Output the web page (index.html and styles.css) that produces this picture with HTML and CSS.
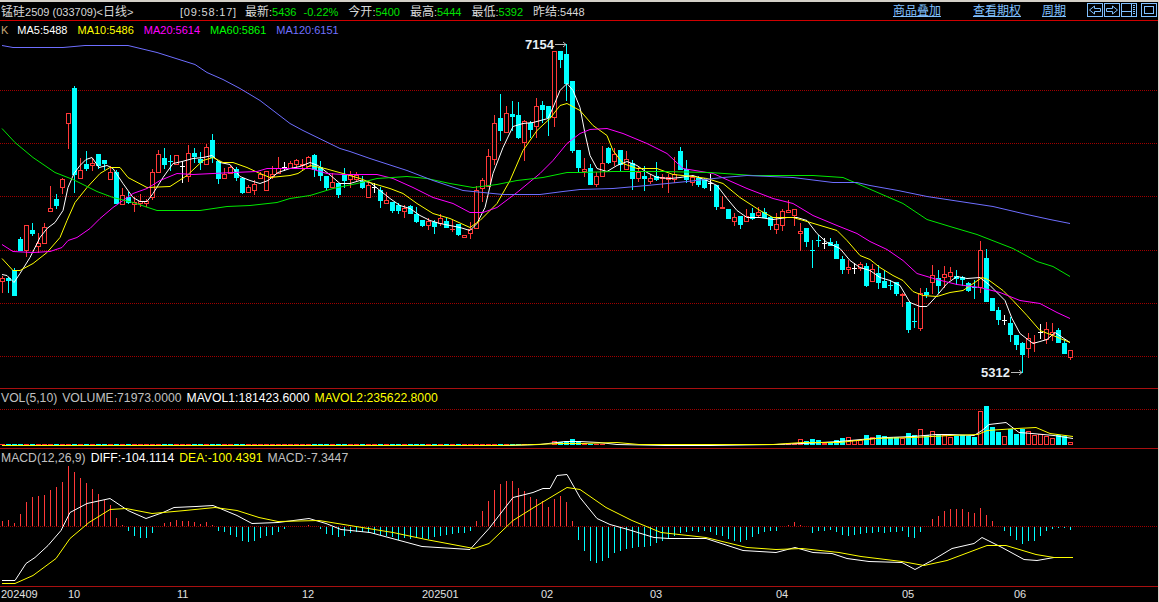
FILE: index.html
```html
<!DOCTYPE html>
<html lang="zh-CN">
<head>
    <meta charset="UTF-8">
    <title>锰硅2509 日线</title>
    <link rel="stylesheet" href="styles.css">
</head>
<body>
    <div class="toolbar">
        <div class="title"><span class="cjk">锰硅</span>2509 (033709)&lt;<span class="cjk">日线</span>&gt;</div>
        <div class="quote">
            <span class="clock">[09:58:17]</span>
            <span class="quote-item"><span class="cjk">最新</span>:<b>5436</b><b class="change">-0.22%</b></span>
            <span class="quote-item"><span class="cjk">今开</span>:<b>5400</b></span>
            <span class="quote-item"><span class="cjk">最高</span>:<b>5444</b></span>
            <span class="quote-item"><span class="cjk">最低</span>:<b>5392</b></span>
            <span class="quote-item"><span class="cjk">昨结</span>:5448</span>
        </div>
        <div class="tools">
            <a class="tool-link tool-link-wide" href="#">商品叠加</a>
            <a class="tool-link" href="#">查看期权</a>
            <a class="tool-link" href="#">周期</a>
            <div class="tool-icons">
                <svg class="tool-icon" viewBox="0 0 16 14"><rect x="0.5" y="0.5" width="15" height="13"/><polygon points="2.5,7 7.5,3 7.5,5.5 13.5,5.5 13.5,8.5 7.5,8.5 7.5,11"/></svg>
                <svg class="tool-icon" viewBox="0 0 16 14"><rect x="0.5" y="0.5" width="15" height="13"/><polygon points="13.5,7 8.5,3 8.5,5.5 2.5,5.5 2.5,8.5 8.5,8.5 8.5,11"/></svg>
                <svg class="tool-icon" viewBox="0 0 16 14"><rect x="0.5" y="0.5" width="15" height="13"/><path d="M1 8.5H10.5M10.5 1V13M12 2.5H14M12 4.5H14M12 6.5H14M12 8.5H14M12 10.5H14"/></svg>
                <svg class="tool-icon tool-icon-last" viewBox="0 0 16 14"><rect x="0.5" y="0.5" width="15" height="13"/><rect x="3.5" y="3.5" width="9" height="7"/></svg>
            </div>
        </div>
    </div>

    <div class="panel panel-main">
        <svg class="plot" id="plotMain" viewBox="0 21 1159 367"></svg>
        <div class="legend">
            <span class="k-label">K</span>
            <span class="white">MA5:5488</span>
            <span class="yellow">MA10:5486</span>
            <span class="magenta">MA20:5614</span>
            <span class="green">MA60:5861</span>
            <span class="blue">MA120:6151</span>
        </div>
    </div>

    <div class="panel panel-vol">
        <svg class="plot" id="plotVol" viewBox="0 389 1159 59"></svg>
        <div class="legend legend-tight">
            <span class="grey">VOL(5,10)</span>
            <span class="grey">VOLUME:71973.0000</span>
            <span class="white">MAVOL1:181423.6000</span>
            <span class="yellow">MAVOL2:235622.8000</span>
        </div>
    </div>

    <div class="panel panel-macd">
        <svg class="plot" id="plotMacd" viewBox="0 449 1159 137"></svg>
        <div class="legend legend-tight">
            <span class="grey">MACD(12,26,9)</span>
            <span class="white">DIFF:-104.1114</span>
            <span class="yellow">DEA:-100.4391</span>
            <span class="grey">MACD:-7.3447</span>
        </div>
    </div>

    <div class="axis" id="axis"></div>

    <script src="chart.js"></script>
</body>
</html>
```

FILE: styles.css
```css
* {
    margin: 0;
    padding: 0;
    box-sizing: border-box;
}

body {
    background: #000;
    color: #d8d8d8;
    font-family: "Liberation Sans", "Noto Sans CJK SC", sans-serif;
    font-size: 11px;
    width: 1159px;
    height: 602px;
    overflow: hidden;
    border-right: 1px solid #d4d0c8;
}

.cjk {
    font-family: "Noto Sans CJK SC", sans-serif;
    font-size: 12px;
}

.toolbar {
    display: flex;
    align-items: center;
    height: 21px;
    padding-bottom: 2px;
    border-top: 2px solid #d4d0c8;
    border-bottom: 1px solid #d00000;
    white-space: nowrap;
}

.title {
    width: 180px;
    padding-left: 1px;
}

.quote {
    display: flex;
    align-items: baseline;
    gap: 10px;
}

.clock {
    letter-spacing: 0.8px;
    margin-right: -2px;
}

.quote b {
    font-weight: normal;
    color: #00e000;
}

.quote-item .change {
    margin-left: 7px;
}

.tools {
    display: flex;
    align-items: center;
    margin-left: auto;
    padding-right: 1px;
}

.tool-link {
    font-family: "Noto Sans CJK SC", sans-serif;
    font-size: 12px;
    line-height: 14px;
    color: #80c0ff;
    margin-right: 21px;
}

.tool-link-wide {
    margin-right: 32px;
}

.tool-icons {
    display: flex;
    gap: 1px;
}

.tool-icon {
    display: block;
    width: 16px;
    height: 14px;
    fill: none;
    stroke: #80c0ff;
    stroke-width: 1;
}

.tool-icon-last {
    margin-left: 3px;
}

.panel {
    position: relative;
    overflow: hidden;
    border-bottom: 1px solid #a81010;
}

.panel-main {
    height: 368px;
}

.panel-vol {
    height: 60px;
}

.panel-macd {
    height: 138px;
}

.plot {
    position: absolute;
    top: 0;
    left: 0;
    width: 1159px;
}

#plotMain {
    height: 367px;
}

#plotVol {
    height: 59px;
}

#plotMacd {
    height: 137px;
}

.legend {
    position: relative;
    display: flex;
    gap: 10px;
    height: 18px;
    line-height: 18px;
    padding-left: 1px;
    white-space: nowrap;
}

.legend-tight {
    gap: 5px;
    font-size: 12.2px;
}

.k-label {
    color: #c8a878;
    margin-right: -1px;
}

.white {
    color: #fff;
}

.yellow {
    color: #ff0;
}

.magenta {
    color: #f0f;
}

.green {
    color: #0f0;
}

.blue {
    color: #7070ff;
}

.grey {
    color: #c0c0c0;
}

.axis {
    position: relative;
    height: 15px;
}

.axis-label {
    position: absolute;
    top: 0;
    line-height: 14px;
    color: #e0e0e0;
}

.extreme {
    font-family: "Liberation Sans", sans-serif;
    font-size: 13px;
    font-weight: bold;
    fill: #e8eef4;
}
```

FILE: chart.js
```js
const RED = '#ff3838';
const CYAN = '#00ffff';
const GRID = '#a00000';

// r = red hollow, c = cyan solid, w = white cross: [type, bodyTop, bodyBottom, high, low]
const candles = [
    ['r',278,281,276,292],['c',278,280,277,292],['c',270,295,268,295],['c',239,250,237,250],['r',225,250,225,256],
    ['c',230,233,223,235],['r',243,246,233,252],['r',227,243,223,243],['r',208,211,186,211],['c',199,205,194,208],
    ['r',179,187,178,193],['r',113,123,113,148],['c',88,174,86,192],['r',170,178,158,178],['c',164,168,151,170],
    ['r',163,165,158,170],['c',154,165,154,168],['c',160,163,160,169],['r',172,179,166,179],['c',172,203,170,203],
    ['r',195,204,188,204],['c',197,202,192,203],['r',202,204,197,211],['r',201,203,194,206],['r',201,203,199,206],
    ['r',172,197,169,199],['r',154,172,150,172],['c',158,164,148,168],['c',161,161,155,170],['r',155,164,155,164],
    ['w',166,166,161,182],['r',153,176,145,181],['c',153,156,148,162],['c',159,162,152,169],['r',147,164,144,164],
    ['c',140,157,134,162],['c',161,178,161,183],['r',174,178,168,178],['r',167,173,165,173],['c',169,177,167,180],
    ['c',178,192,178,193],['r',187,192,185,192],['r',184,190,180,194],['r',174,178,172,178],['r',171,190,171,190],
    ['r',174,176,166,178],['r',168,173,157,173],['w',167,167,162,170],['r',163,168,161,168],['r',160,164,159,168],
    ['r',164,165,159,170],['r',157,166,156,166],['c',155,169,154,176],['c',167,175,161,180],['c',176,187,176,189],
    ['r',182,187,173,187],['c',183,194,183,197],['c',174,180,168,187],['r',175,179,171,187],['r',175,179,172,180],
    ['c',181,187,176,188],['r',185,197,183,197],['w',187,187,183,192],['c',190,200,187,207],['r',200,203,192,203],
    ['c',202,210,202,212],['c',205,210,203,213],['r',208,211,205,217],['c',206,213,205,213],['c',214,221,207,222],
    ['c',220,225,220,226],['r',221,225,218,229],['c',222,226,220,233],['r',218,223,214,225],['c',221,227,218,227],
    ['r',229,229,220,231],['c',224,234,224,235],['r',235,237,235,237],['r',229,233,222,238],['r',190,228,186,228],
    ['r',180,188,178,201],['r',156,186,149,186],['r',123,159,115,164],['c',118,130,94,140],['r',113,132,106,132],
    ['c',114,116,101,130],['c',115,137,102,138],['r',121,142,120,160],['c',123,129,121,137],['r',106,126,98,137],
    ['c',105,109,101,122],['c',106,117,106,135],['r',51,117,51,126],['c',51,59,51,67],['c',54,83,44,100],
    ['c',81,150,81,152],['c',150,167,150,172],['r',169,171,158,176],['c',168,184,164,184],['r',176,184,172,186],
    ['r',163,176,146,176],['c',148,162,147,163],['r',154,161,148,165],['c',150,164,150,170],['r',159,169,151,169],
    ['c',163,178,160,189],['r',172,178,166,181],['c',176,178,166,190],['r',178,181,174,183],['c',176,179,162,180],
    ['r',177,178,174,187],['r',177,179,174,192],['r',174,179,157,182],['c',151,169,147,169],['c',169,179,160,182],
    ['r',177,182,175,185],['c',178,184,176,186],['c',179,187,178,188],['w',183,183,174,190],['c',185,206,185,209],
    ['r',207,208,196,208],['c',209,218,209,218],['r',217,221,213,225],['c',216,224,216,228],['r',216,221,209,221],
    ['c',213,218,208,219],['r',212,215,207,217],['c',212,217,208,217],['c',217,225,216,229],['r',224,229,213,233],
    ['r',211,225,209,230],['r',210,212,200,212],['r',209,215,209,225],['r',231,233,223,250],['c',228,241,228,246],
    ['c',250,250,240,267],['c',240,240,235,246],['w',243,243,238,248],['c',242,245,238,245],['c',244,258,241,258],
    ['c',259,269,256,273],['r',267,269,260,273],['w',268,268,263,273],['r',264,268,262,270],['c',266,285,263,286],
    ['r',269,281,264,281],['c',273,282,265,288],['c',281,287,270,287],['c',285,285,280,289],['c',282,293,282,295],
    ['r',294,295,293,306],['c',302,329,302,332],['c',321,321,308,327],['r',293,328,288,330],['c',292,294,288,297],
    ['r',275,282,265,293],['c',278,285,270,292],['r',274,277,266,287],['r',272,276,267,279],['c',276,278,270,284],
    ['c',277,279,276,285],['c',283,290,282,291],['c',287,287,280,298],['r',250,287,241,292],['c',258,301,249,301],
    ['c',298,310,298,310],['c',310,319,307,324],['w',320,320,315,324],['c',323,334,317,341],['c',335,344,335,349],
    ['c',343,354,342,372],['r',338,348,333,357],['r',342,342,335,351],['w',332,332,324,338],['r',329,339,322,343],
    ['r',332,334,323,340],['c',330,342,328,342],['c',343,353,339,353],['r',350,357,350,359]
];

const maLines = [
    { color: '#ffffff', points: [2,274,7,275,14,282,20,273,30,257,40,237,47,228,55,222,63,210,68,187,74,173,80,165,86,159,92,157,99,167,107,165,113,168,123,183,133,197,140,201,147,201,153,193,163,177,173,163,182,161,193,158,203,157,212,155,220,162,230,164,240,176,250,180,260,183,268,180,278,172,290,168,300,166,310,162,318,165,327,172,333,177,340,183,350,183,360,180,370,182,380,190,390,198,400,205,410,208,420,215,430,220,440,223,450,225,460,227,470,230,477,223,485,207,493,173,503,147,513,126,523,123,533,122,548,118,553,107,560,90,567,83,573,90,580,107,585,133,590,155,597,168,607,171,617,165,627,161,637,165,647,172,657,177,670,178,680,177,693,175,707,180,717,185,727,198,737,210,747,217,760,217,773,219,787,217,797,217,807,220,817,233,827,242,840,248,850,260,860,267,870,270,880,277,890,280,900,285,910,302,920,306,927,306,937,295,947,283,957,276,967,278,980,277,990,285,1005,300,1012,318,1020,333,1033,343,1047,339,1055,332,1070,342] },
    { color: '#ffff00', points: [2,258,13,270,20,270,33,263,47,252,60,237,67,220,75,202,87,187,100,173,110,167,120,167,128,177,147,187,170,186,187,175,203,160,213,157,223,162,233,162,247,167,260,173,270,177,290,175,298,173,310,165,325,168,343,173,360,178,373,183,390,188,403,193,417,203,433,213,450,218,470,227,480,220,497,203,510,180,523,150,537,130,550,118,560,105,567,103,580,110,593,125,607,135,613,150,623,163,637,168,657,168,673,174,693,176,707,178,723,183,740,197,760,210,773,217,793,217,807,221,817,224,837,230,847,240,860,255,870,259,880,267,893,275,903,280,913,291,923,295,937,296,950,292,963,290,982,277,988,279,1003,290,1013,300,1027,315,1040,330,1053,335,1070,342] },
    { color: '#ff00ff', points: [2,244,13,251,33,252,50,251,62,247,68,240,77,237,90,228,100,218,113,207,123,200,133,193,147,188,160,180,177,173,193,174,213,173,233,172,257,171,267,168,290,168,310,168,327,173,343,174,377,174,393,178,413,187,433,197,453,203,470,212,483,212,497,207,517,192,540,173,553,160,567,143,580,133,590,129,607,128,623,133,647,143,667,153,683,168,713,173,747,188,773,198,793,203,813,215,837,225,857,233,870,241,887,249,903,260,917,273,937,279,957,284,980,287,1000,292,1020,300,1040,303,1057,312,1070,318] },
    { color: '#00e800', points: [2,128,15,142,33,157,55,172,73,179,97,191,113,197,133,202,157,210,200,210,227,206,250,205,277,202,290,198,310,195,333,188,357,183,377,178,407,176,427,178,450,183,473,187,497,184,517,180,543,177,567,172,580,172,613,171,663,171,710,172,753,175,813,175,843,177,857,183,873,190,903,203,927,219,950,226,977,234,1013,248,1037,261,1053,266,1070,276] },
    { color: '#6e6eff', points: [2,45,13,47,63,47,85,45,128,45,157,52,195,64,207,72,223,79,240,88,260,100,277,113,290,123,303,130,340,148,350,151,370,158,407,170,433,180,463,190,503,194,540,194,563,191,580,189,613,188,647,185,687,181,723,177,747,175,793,177,833,182,857,182,870,185,898,190,927,196,960,201,993,206,1027,214,1050,219,1070,223] }
];

// volume bar height per candle from index 89 on, everything before it is a 1px stub
const volumeTail = { 92:4,93:3,94:3,95:6,96:4,97:2,98:1,99:1,100:1,112:1,129:1,130:1,131:2,132:2,133:6,134:4,135:6,136:5,137:2,138:2,139:5,140:7,141:8,142:5,143:5,144:10,145:8,146:10,147:9,148:8,149:8,150:7,151:12,152:10,153:16,154:10,155:14,156:10,157:10,158:8,159:9,160:10,161:9,162:8,163:34,164:39,165:18,166:13,167:9,168:16,169:11,170:16,171:14,172:10,173:11,174:9,175:7,176:10,177:9,178:3 };

const volLines = [
    { color: '#ffffff', points: [2,445,510,445,540,444,565,441,580,441,599,442,617,444,665,445,710,445,776,444,802,443,821,442,839,441,861,439,887,437,913,436,936,434,950,434,974,435,982,430,989,424,1006,422,1019,432,1032,433,1054,435,1073,438] },
    { color: '#ffff00', points: [2,445,500,445,535,444,560,443,580,443,617,442,639,444,773,444,802,442,839,442,876,438,913,437,950,435,978,434,987,430,1017,428,1036,427,1050,433,1073,436] }
];

const macdBars = [5,6,3,12,24,29,30,31,36,39,44,60,54,48,43,37,32,26,21,8,1,-4,-9,-11,-11,-6,0,3,4,6,5,5,4,2,4,1,-4,-5,-8,-10,-14,-15,-14,-11,-9,-8,-5,-2,0,0,0,1,0,-2,-7,-8,-10,-9,-6,-5,-5,-6,-7,-8,-9,-10,-13,-11,-12,-10,-11,-12,-10,-9,-8,-7,-6,-6,-4,5,15,25,36,42,45,45,38,35,29,27,25,19,27,30,24,5,-13,-24,-34,-36,-34,-31,-26,-24,-22,-21,-20,-20,-19,-16,-14,-12,-9,-6,-5,-4,-5,-4,-5,-8,-9,-12,-14,-15,-13,-10,-7,-5,-4,-4,0,1,4,1,0,-6,-4,-4,-3,-5,-8,-9,-8,-7,-6,-6,-5,-6,-5,-5,-4,-10,-11,-5,0,7,10,15,17,17,17,14,13,18,11,5,0,-4,-9,-13,-17,-14,-14,-9,-4,-2,-1,-1,-3];

const macdLines = [
    { color: '#ffffff', points: [2,580,15,580,26,563,35,557,48,545,61,530,70,512,87,503,110,498,128,510,146,518,163,512,174,507,196,506,213,505,237,515,252,523,278,522,309,518,326,523,341,529,370,532,396,539,422,546,470,549,489,528,513,497,533,492,543,488,550,488,557,475,567,474,580,497,597,518,610,524,628,529,654,537,669,538,706,538,743,550,776,552,795,547,813,552,832,553,847,558,869,561,902,562,915,569,932,560,952,548,974,543,982,537,1002,547,1024,559,1037,560,1054,557,1073,557] },
    { color: '#ffff00', points: [2,583,15,583,33,575,56,558,70,538,89,522,110,509,126,508,152,513,185,510,215,507,237,510,259,517,278,521,319,520,356,526,393,532,426,539,474,548,489,543,513,520,537,505,567,487,580,489,606,507,632,520,661,532,706,537,747,547,776,549,802,548,839,552,861,556,902,561,924,565,947,560,987,545,1006,545,1036,554,1054,557,1073,557] }
];

const monthLabels = [
    ['202409', 1], ['10', 68], ['11', 177], ['12', 302], ['202501', 422],
    ['02', 541], ['03', 650], ['04', 776], ['05', 902], ['06', 1014]
];

// Build one svg node
function node(parent, name, attrs, text) {
    const el = document.createElementNS('http://www.w3.org/2000/svg', name);
    Object.keys(attrs).forEach(key => el.setAttribute(key, attrs[key]));
    if (text) el.textContent = text;
    parent.appendChild(el);
    return el;
}

function candleX(i) {
    return 2 + 6 * i;
}

function vLine(svg, x, y1, y2, color) {
    node(svg, 'rect', { x: x, y: y1, width: 1, height: Math.max(y2 - y1, 1), fill: color, 'shape-rendering': 'crispEdges' });
}

function gridLine(svg, y) {
    node(svg, 'line', { x1: 0, x2: 1159, y1: y, y2: y, stroke: GRID, 'stroke-dasharray': '1 1', 'shape-rendering': 'crispEdges' });
}

function polyline(svg, line) {
    const pts = [];
    for (let i = 0; i < line.points.length; i += 2) {
        pts.push(line.points[i] + ',' + (line.points[i + 1] + 0.5));
    }
    node(svg, 'polyline', { points: pts.join(' '), fill: 'none', stroke: line.color, 'stroke-width': 1 });
}

// Main price panel
function drawMain() {
    const svg = document.getElementById('plotMain');
    [90.5, 143.5, 196.5, 250.5, 303.5, 356.5].forEach(y => gridLine(svg, y));

    candles.forEach((c, i) => {
        const [type, top, bottom, high, low] = c;
        const x = candleX(i);
        const color = type === 'r' ? RED : type === 'c' ? CYAN : '#ffffff';
        vLine(svg, x, high, low + 1, color);
        if (top === bottom) {
            node(svg, 'rect', { x: x - 2, y: top, width: 5, height: 1, fill: color, 'shape-rendering': 'crispEdges' });
        } else if (type === 'r') {
            node(svg, 'rect', { x: x - 1.5, y: top + 0.5, width: 4, height: bottom - top, fill: '#000', stroke: color, 'shape-rendering': 'crispEdges' });
        } else {
            node(svg, 'rect', { x: x - 2, y: top, width: 5, height: bottom - top + 1, fill: color, 'shape-rendering': 'crispEdges' });
        }
    });

    maLines.forEach(line => polyline(svg, line));

    node(svg, 'text', { x: 525, y: 49, class: 'extreme' }, '7154');
    node(svg, 'path', { d: 'M555 44.5H566M563 42L566 44.5L563 47', fill: 'none', stroke: '#b8b8b8' });
    node(svg, 'text', { x: 981, y: 377, class: 'extreme' }, '5312');
    node(svg, 'path', { d: 'M1011 372.5H1022M1019 370L1022 372.5L1019 375', fill: 'none', stroke: '#b8b8b8' });
}

// Volume panel
function drawVolume() {
    const svg = document.getElementById('plotVol');
    gridLine(svg, 409.5);

    candles.forEach((c, i) => {
        const h = volumeTail[i] || (i < 89 ? 1 : 0);
        if (!h) return;
        const x = candleX(i);
        if (c[0] === 'c') {
            node(svg, 'rect', { x: x - 2, y: 445 - h, width: 5, height: h, fill: CYAN, 'shape-rendering': 'crispEdges' });
        } else if (h > 2) {
            node(svg, 'rect', { x: x - 1.5, y: 445.5 - h, width: 4, height: h - 1, fill: '#000', stroke: RED, 'shape-rendering': 'crispEdges' });
        } else {
            node(svg, 'rect', { x: x - 2, y: 445 - h, width: 5, height: h, fill: RED, 'shape-rendering': 'crispEdges' });
        }
    });

    volLines.forEach(line => polyline(svg, line));
}

// MACD panel
function drawMacd() {
    const svg = document.getElementById('plotMacd');
    gridLine(svg, 526.5);

    macdBars.forEach((v, i) => {
        if (v > 0) vLine(svg, candleX(i), 526 - v, 526, RED);
        if (v < 0) vLine(svg, candleX(i), 527, 527 - v, CYAN);
    });

    macdLines.forEach(line => polyline(svg, line));
}

function drawAxis() {
    const axis = document.getElementById('axis');
    monthLabels.forEach(([text, x]) => {
        const label = document.createElement('span');
        label.className = 'axis-label';
        label.textContent = text;
        label.style.left = x + 'px';
        axis.appendChild(label);
    });
}

drawMain();
drawVolume();
drawMacd();
drawAxis();
```
